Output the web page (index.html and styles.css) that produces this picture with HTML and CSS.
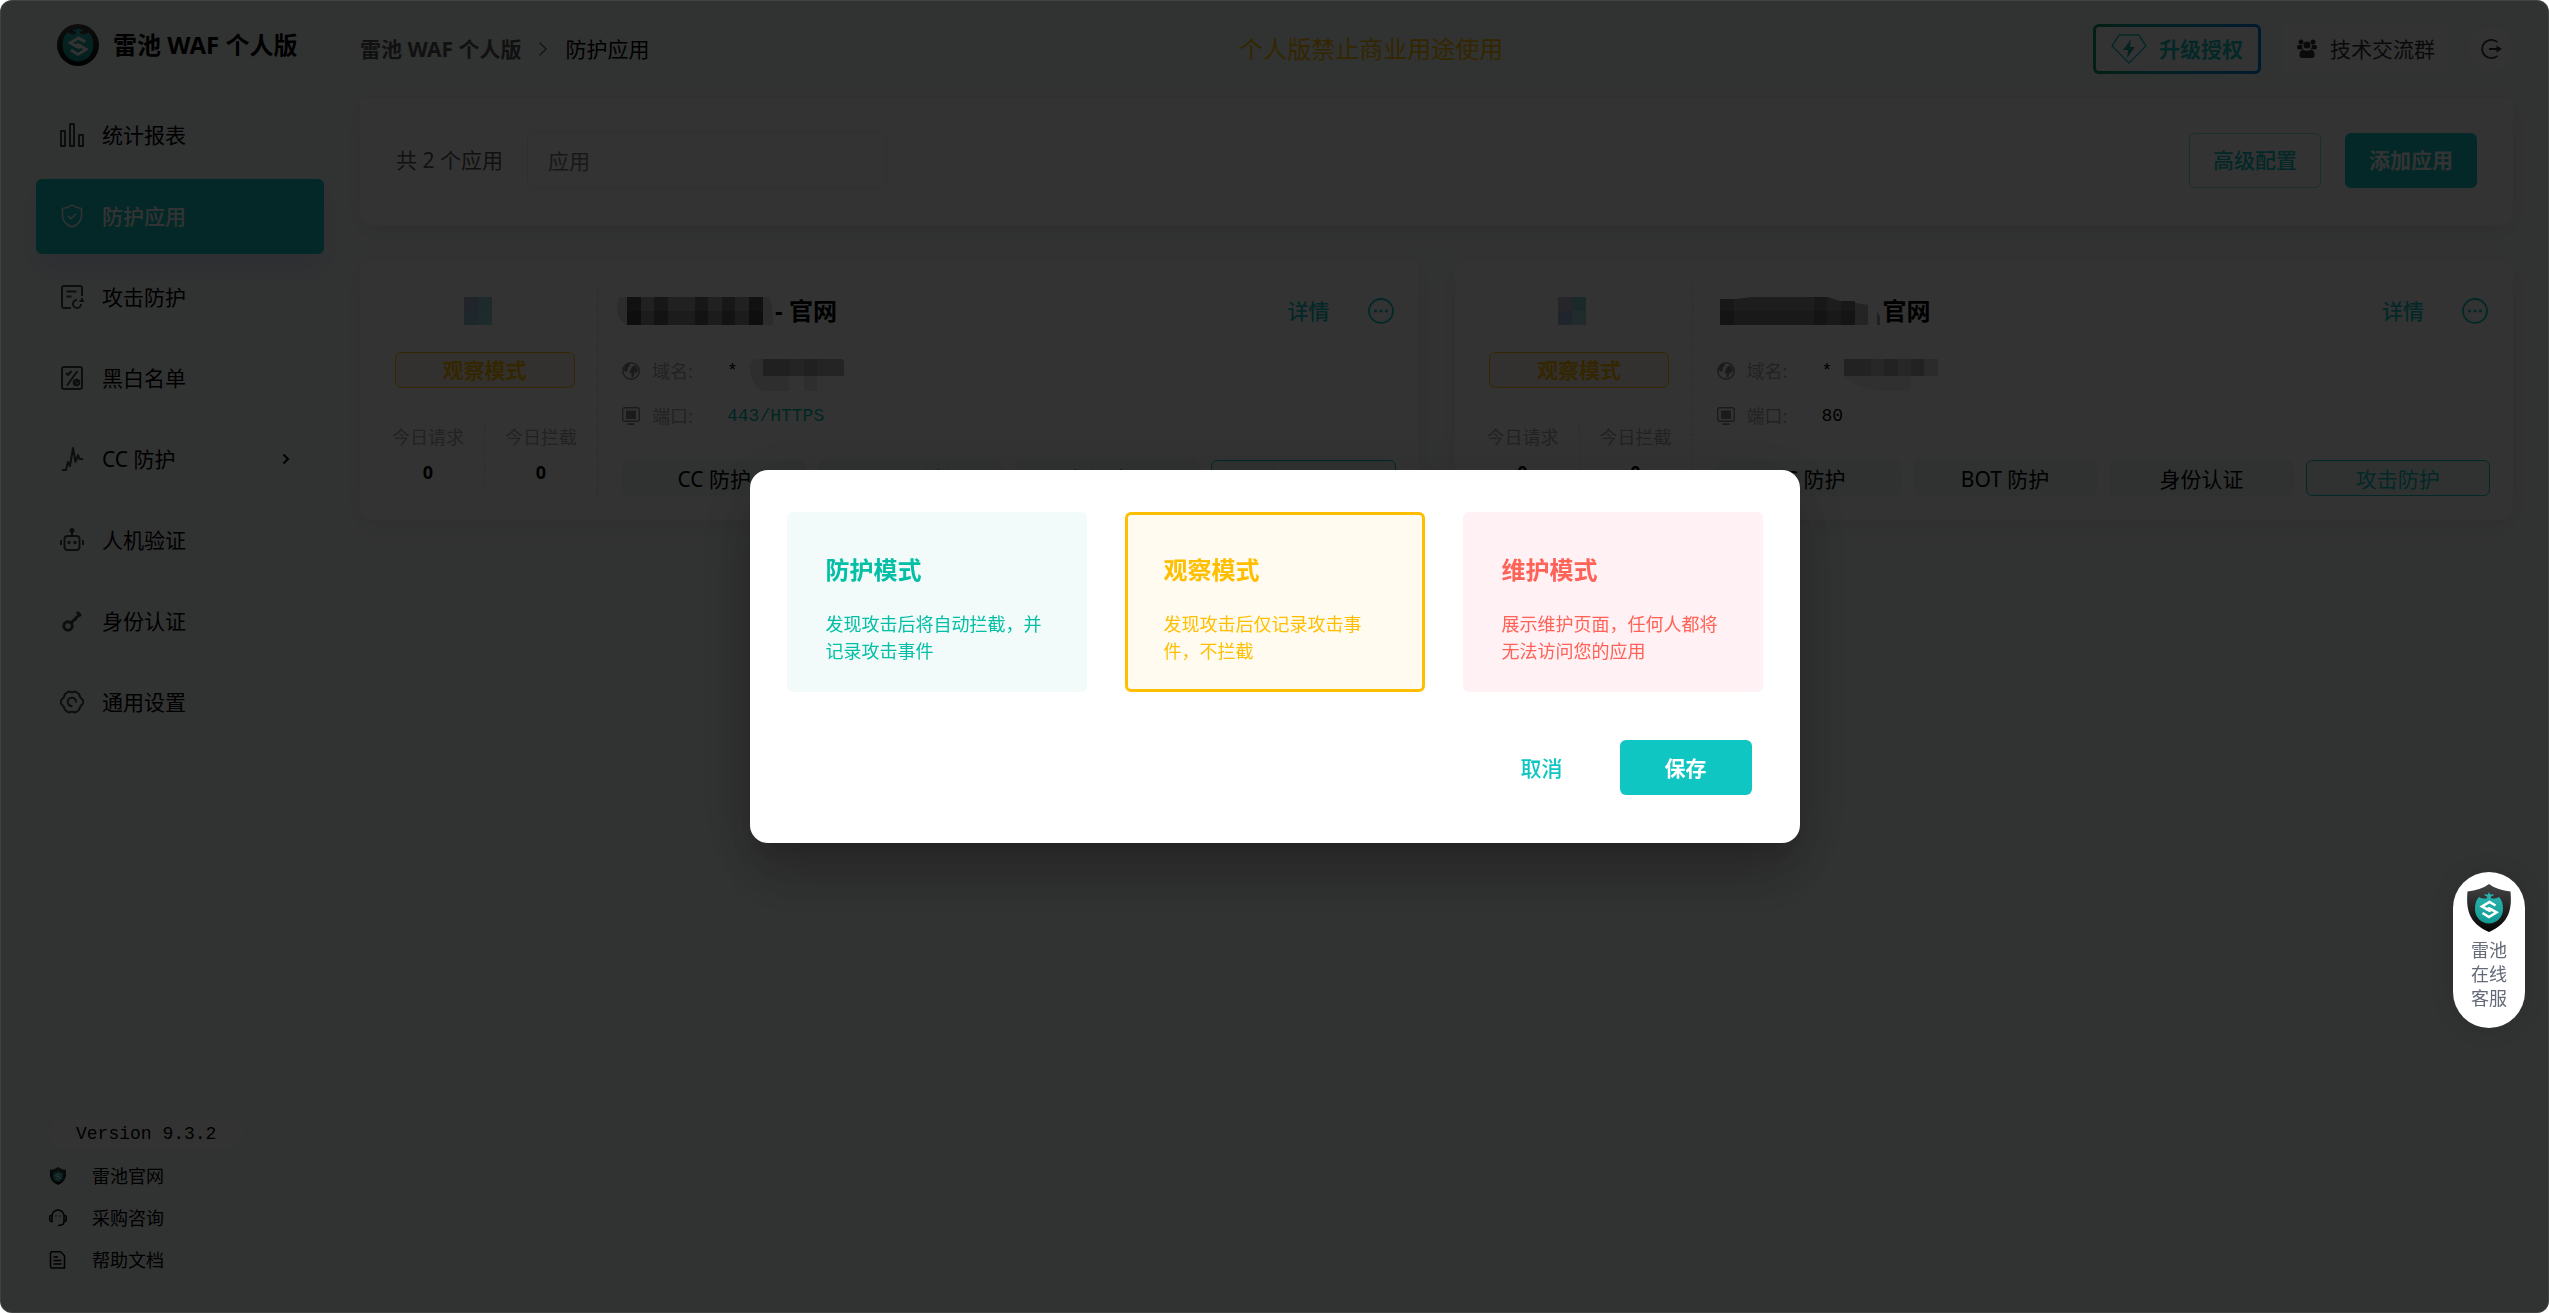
FILE: index.html
```html
<!DOCTYPE html>
<html lang="zh-CN">

<head>
    <meta charset="UTF-8">
    <meta name="viewport" content="width=device-width, initial-scale=1.0">
    <title>雷池 WAF 个人版 - 防护应用</title>
    <link rel="stylesheet" href="styles.css">
</head>

<body>
    <!-- shared icons -->
    <svg class="sprite" aria-hidden="true">
        <defs>
            <linearGradient id="teal" x1="0" y1="0" x2="0" y2="1">
                <stop offset="0" stop-color="#2bb5b0" />
                <stop offset="1" stop-color="#139a94" />
            </linearGradient>
            <linearGradient id="black" x1="0" y1="0" x2="0" y2="1">
                <stop offset="0" stop-color="#444" />
                <stop offset="1" stop-color="#050505" />
            </linearGradient>
        </defs>
        <symbol id="mark" viewBox="0 0 28 32">
            <path d="M14 0l1 2.300c1.300.5 2.700.3 4-.4-.4 1.600-1.600 2.400-3.300 2.500l.6 2.100c2.600.3 5.200-.1 7.700-1.400C27 8.500 28 12 28 17c0 8-6 14.500-14 14.500S0 25 0 17C0 12 1 8.500 4 5.100c2.500 1.300 5.100 1.700 7.700 1.400l.6-2.100C10.600 4.300 9.400 3.500 9 1.900c1.300.7 2.700.9 4 .4z" fill="url(#teal)" />
            <path d="M20.500 13.500L14.500 10 7 14.500l7.500 4.200 3-1.700M7.500 21l6.500 4 7.500-4.600-7.500-4.200-3 1.800" fill="none" stroke="#fff" stroke-width="2.600" />
        </symbol>
        <symbol id="shield" viewBox="0 0 44 48">
            <path d="M22 0c6 4.500 13 6.500 21.500 7.500C45 24 43 39 22 48 1 39-1 24 .5 7.500 9 6.500 16 4.500 22 0z" fill="url(#black)" />
            <use href="#mark" x="7" y="8" width="30" height="32" />
        </symbol>
        <symbol id="globe" viewBox="0 0 18 18">
            <circle cx="9" cy="9" r="8.200" fill="none" stroke="currentColor" stroke-width="1.400" />
            <path d="M4 2.500L7.500 1l.5 3-2.500 1.500L6 8l-2 2-2.500-2zM9 6.500l2.500-3 3 1 1.500 4-1.500 2.500-2-.5-1 4.500-2 .5v-4L7.500 11z" fill="currentColor" />
        </symbol>
        <symbol id="port" viewBox="0 0 18 18">
            <rect x=".7" y=".7" width="16.600" height="13.600" rx="2" fill="none" stroke="currentColor" stroke-width="1.400" />
            <path d="M4 3.500h10v8.500H4zM5.500 16.200h7v1.800h-7z" fill="currentColor" />
        </symbol>
        <symbol id="more" viewBox="0 0 26 26">
            <circle cx="13" cy="13" r="12" fill="none" stroke="currentColor" stroke-width="1.800" />
            <circle cx="7.500" cy="13" r="1.600" fill="currentColor" />
            <circle cx="13" cy="13" r="1.600" fill="currentColor" />
            <circle cx="18.500" cy="13" r="1.600" fill="currentColor" />
        </symbol>
    </svg>

    <aside class="sidebar">
        <div class="brand">
            <svg class="brand-logo" viewBox="0 0 42 42">
                <circle cx="21" cy="21" r="21" fill="url(#black)" />
                <use href="#mark" x="5" y="3" width="32" height="35" />
            </svg>
            <span>雷池 WAF 个人版</span>
        </div>

        <nav class="menu">
            <a class="menu-item" href="#">
                <svg class="menu-icon" viewBox="0 0 24 24"><path d="M1 8h4v15H1zM10 1h4v22h-4zM19 12h4v11h-4z" /></svg>
                统计报表
            </a>
            <a class="menu-item active" href="#">
                <svg class="menu-icon" viewBox="0 0 24 24"><path d="M12 1c3 2.200 6 3 9.500 3.500v7c0 5.500-4 9.500-9.500 11.500-5.500-2-9.500-6-9.500-11.500v-7C6 4 9 3.200 12 1zM8 12l3 2.700 5-5" /></svg>
                防护应用
            </a>
            <a class="menu-item" href="#">
                <svg class="menu-icon" viewBox="0 0 24 24"><path d="M11 23H4a2 2 0 0 1-2-2V3a2 2 0 0 1 2-2h16a2 2 0 0 1 2 2v8M6.500 6.500h10M6.500 11.500h5M17 15a4 4 0 1 0 4 4M22 13v3.500M19.500 16H24" /></svg>
                攻击防护
            </a>
            <a class="menu-item" href="#">
                <svg class="menu-icon" viewBox="0 0 24 24"><rect x="2" y="1" width="20" height="22" rx="2" /><path d="M6 7l2 2 3.500-4M17.500 5L7 19.500M14 18.500l4.500-4" /><circle cx="16.500" cy="16.500" r="2.800" /></svg>
                黑白名单
            </a>
            <a class="menu-item" href="#">
                <svg class="menu-icon" viewBox="0 0 24 24"><path d="M2 23h4l2-8 2 4L13 1l2.500 14L18 8l1.500 4H23" /></svg>
                CC 防护
                <svg class="menu-arrow" viewBox="0 0 12 12"><path d="M3.500 1.500L8 6l-4.500 4.500" /></svg>
            </a>
            <a class="menu-item" href="#">
                <svg class="menu-icon" viewBox="0 0 24 24"><rect x="4.500" y="8" width="15" height="14" rx="3" /><path d="M12 8V3M1 12v5M23 12v5" /><circle class="solid" cx="12" cy="2.500" r="1.500" /><circle class="solid" cx="9" cy="14.500" r=".7" /><circle class="solid" cx="15" cy="14.500" r=".7" /></svg>
                人机验证
            </a>
            <a class="menu-item" href="#">
                <svg class="menu-icon key" viewBox="0 0 24 24"><circle cx="8" cy="17" r="4.200" /><path d="M11 14L20.500 4.500M14 9l2.500 2M17 3l4 4" /></svg>
                身份认证
            </a>
            <a class="menu-item" href="#">
                <svg class="menu-icon" viewBox="0 0 24 24"><path d="M8.500 1.500q3.500 1.500 7 0L19 4q.5 3.500 4 6.200v3.600q-3.500 2.700-4 6.200l-3.500 2.500q-3.500-1.500-7 0L5 20q-.5-3.500-4-6.200v-3.600Q4.500 7.500 5 4zM12.500 16a4.200 4.200 0 1 1 3.500-3.500" /></svg>
                通用设置
            </a>
        </nav>

        <div class="sidebar-footer">
            <span class="version">Version 9.3.2</span>
            <a class="footer-link" href="#">
                <svg viewBox="0 0 44 48"><use href="#shield" /></svg>
                雷池官网
            </a>
            <a class="footer-link" href="#">
                <svg viewBox="0 0 18 18"><path d="M3 7a6 6 0 0 1 12 0M3 7v5.500H2A1.500 1.500 0 0 1 .8 11V9A1.500 1.500 0 0 1 3 7zM15 7v5.500h1a1.500 1.500 0 0 0 1.200-1.500V9A1.500 1.500 0 0 0 15 7zM15 12.500c0 2.500-2 4-6 4M7 6.500v1M11 6.500v1" /></svg>
                采购咨询
            </a>
            <a class="footer-link" href="#">
                <svg viewBox="0 0 18 18"><path d="M3 .8h8.500l4 4V17H3a1.500 1.500 0 0 1-1.500-1.500v-13A1.500 1.500 0 0 1 3 .8zM4.500 6H9M4.500 9.500h8M4.500 13h8" /></svg>
                帮助文档
            </a>
        </div>
    </aside>

    <main class="main">
        <header class="topbar">
            <div class="breadcrumb">
                <a href="#">雷池 WAF 个人版</a>
                <svg viewBox="0 0 10 16"><path d="M1.500 1.500L8 8l-6.500 6.500" /></svg>
                <span>防护应用</span>
            </div>
            <div class="notice">个人版禁止商业用途使用</div>
            <div class="topbar-actions">
                <button class="upgrade">
                    <svg viewBox="0 0 36 30">
                        <path d="M8 1h20l7 11-17 17L1 12z" fill="none" stroke="#0fc6c2" stroke-width="1.400" />
                        <path d="M20 5l-8 11h5l-1 8 8-11h-5z" fill="url(#teal)" />
                    </svg>
                    升级授权
                </button>
                <button class="group">
                    <svg viewBox="0 0 20 20">
                        <circle cx="4" cy="3" r="2.500" /><circle cx="16" cy="3" r="2.500" /><circle cx="10" cy="6" r="3.600" />
                        <path d="M0 8q0-2 2-2h3q0 2.500 1.300 3.700Q5 10.500 2 10.500 0 10.500 0 8zM20 8q0-2-2-2h-3q0 2.500-1.300 3.700 1.300.8 4.300.8 2 0 2-2.500zM2.500 15q0-3.500 3.500-4.500 4 2.500 8 0 3.500 1 3.500 4.500v1.500q0 2.500-3 2.500h-9q-3 0-3-2.500z" />
                    </svg>
                    技术交流群
                </button>
                <button class="logout" aria-label="退出登录">
                    <svg viewBox="0 0 22 22"><path d="M17.500 4.200A9.200 9.200 0 1 0 17.500 17.800M9 11h8" fill="none" stroke="currentColor" stroke-width="1.800" /><path d="M16.500 7.500L22 11l-5.500 3.500z" /></svg>
                </button>
            </div>
        </header>

        <section class="filter-card">
            <label for="keyword">共 2 个应用</label>
            <input type="text" id="keyword" placeholder="应用">
            <div class="filter-actions">
                <button class="btn btn-outline">高级配置</button>
                <button class="btn btn-primary">添加应用</button>
            </div>
        </section>

        <section class="apps">
            <article class="app-card">
                <div class="app-side">
                    <svg class="app-icon" viewBox="0 0 28 28"><path fill="#a8b4d4" d="M0 0h14v14H0z" /><path fill="#8fccd2" d="M14 0h14v14H14z" /><path fill="#98c0dc" d="M0 14h14v14H0z" /><path fill="#8fd4dc" d="M14 14h14v14H14z" /></svg>
                    <div class="mode-tag">观察模式</div>
                    <div class="stats">
                        <div class="stat"><span>今日请求</span><b>0</b></div>
                        <div class="stat"><span>今日拦截</span><b>0</b></div>
                    </div>
                </div>
                <div class="app-body">
                    <div class="app-head">
                        <h3>
                            <svg class="mask-name" viewBox="0 0 158 28">
                                <path fill="#dadada" d="M10 0v28Q0 24 0 10 0 3 3 0zM146 0h6q4 6 4 28h-10z" />
                                <path fill="#a5a5a5" d="M10 0h136v28H10z" />
                                <path fill="#555" d="M10 0h14v28H10zM132 0h14v28h-14z" />
                                <path fill="#727272" d="M37 0h14v28H37zM78 0h13v28H78zM105 0h13v28h-13z" />
                                <path fill="#000" fill-opacity=".15" d="M10 14h136v14H10z" />
                            </svg>
                            - 官网
                        </h3>
                        <a href="#">详情</a>
                        <button class="more" aria-label="更多"><svg viewBox="0 0 26 26"><use href="#more" /></svg></button>
                    </div>
                    <dl class="info">
                        <dt><svg viewBox="0 0 18 18"><use href="#globe" /></svg>域名:</dt>
                        <dd>*
                            <svg class="mask-domain" viewBox="0 0 94 32">
                                <path fill="#e6e6e6" d="M5 0h8v32Q0 26 0 8 0 2 5 0zM13 17h26v15H13zM54 17h13v15H54z" />
                                <path fill="#b4b4b4" d="M13 0h78q3 0 3 3v14H13z" />
                                <path fill="#a0a0a0" d="M13 0h27v17H13zM54 0h13v17H54z" />
                            </svg>
                        </dd>
                        <dt><svg viewBox="0 0 18 18"><use href="#port" /></svg>端口:</dt>
                        <dd class="https">443/HTTPS</dd>
                    </dl>
                    <div class="features">
                        <button>CC 防护</button>
                        <button>BOT 防护</button>
                        <button>身份认证</button>
                        <button class="on">攻击防护</button>
                    </div>
                </div>
            </article>

            <article class="app-card">
                <div class="app-side">
                    <svg class="app-icon" viewBox="0 0 28 28"><path fill="#bcbcd0" d="M0 0h14v14H0z" /><path fill="#86ccd6" d="M14 0h14v14H14z" /><path fill="#9ab8d8" d="M0 14h14v14H0z" /><path fill="#a4d4da" d="M14 14h14v14H14z" /></svg>
                    <div class="mode-tag">观察模式</div>
                    <div class="stats">
                        <div class="stat"><span>今日请求</span><b>0</b></div>
                        <div class="stat"><span>今日拦截</span><b>0</b></div>
                    </div>
                </div>
                <div class="app-body">
                    <div class="app-head">
                        <h3>
                            <svg class="mask-name wide" viewBox="0 0 168 28">
                                <path fill="#929292" d="M8 2h16l16-2h76l12 4 28 4v20H8z" />
                                <path fill="#7a7a7a" d="M8 2h14v26H8zM102 0h13v28h-13zM129 4h14v24h-14z" />
                                <path fill="#b4b4b4" d="M143 6l13 2v20h-13z" />
                                <path fill="#000" fill-opacity=".15" d="M8 14h135v14H8z" />
                                <path fill="#a0a0a0" d="M165 14l3 6v8h-3z" />
                            </svg>
                            官网
                        </h3>
                        <a href="#">详情</a>
                        <button class="more" aria-label="更多"><svg viewBox="0 0 26 26"><use href="#more" /></svg></button>
                    </div>
                    <dl class="info">
                        <dt><svg viewBox="0 0 18 18"><use href="#globe" /></svg>域名:</dt>
                        <dd>*
                            <svg class="mask-domain" viewBox="0 0 94 32">
                                <path fill="#eee" d="M0 17h67v15H40Q10 30 0 17z" />
                                <path fill="#c0c0c0" d="M0 0h80v17H0z" />
                                <path fill="#a8a8a8" d="M0 0h27v17H0zM40 0h14v17H40zM67 0h13v17H67z" />
                                <path fill="#d8d8d8" d="M80 0h14v17H80z" />
                            </svg>
                        </dd>
                        <dt><svg viewBox="0 0 18 18"><use href="#port" /></svg>端口:</dt>
                        <dd>80</dd>
                    </dl>
                    <div class="features">
                        <button>CC 防护</button>
                        <button>BOT 防护</button>
                        <button>身份认证</button>
                        <button class="on">攻击防护</button>
                    </div>
                </div>
            </article>
        </section>
    </main>

    <div class="overlay">
        <form class="dialog" role="dialog" aria-label="防护模式">
            <div class="modes">
                <label class="mode protect">
                    <input type="radio" name="mode">
                    <strong>防护模式</strong>
                    <span>发现攻击后将自动拦截，并记录攻击事件</span>
                </label>
                <label class="mode observe">
                    <input type="radio" name="mode" checked>
                    <strong>观察模式</strong>
                    <span>发现攻击后仅记录攻击事件，不拦截</span>
                </label>
                <label class="mode maintain">
                    <input type="radio" name="mode">
                    <strong>维护模式</strong>
                    <span>展示维护页面，任何人都将无法访问您的应用</span>
                </label>
            </div>
            <div class="dialog-actions">
                <button type="button" class="btn btn-text">取消</button>
                <button type="button" class="btn btn-primary">保存</button>
            </div>
        </form>
    </div>

    <a class="service" href="#">
        <svg viewBox="0 0 44 48"><use href="#shield" /></svg>
        <span>雷池</span>
        <span>在线</span>
        <span>客服</span>
    </a>
</body>

</html>
```

FILE: styles.css
```css
* {
    box-sizing: border-box;
}

html {
    background: #fff;
    overflow: hidden;
}

body {
    margin: 0;
    min-height: 100vh;
    display: flex;
    background: #f5faf8;
    color: #000;
    font-family: "Noto Sans", "Noto Sans CJK SC", sans-serif;
    font-size: 21px;
    line-height: 30px;
    border-radius: 12px;
    overflow: hidden;
}

a {
    color: inherit;
    text-decoration: none;
}

button,
input {
    font: inherit;
    color: inherit;
}

button {
    padding: 0;
    border: none;
    background: none;
    cursor: pointer;
}

svg {
    display: block;
    flex: none;
}

.sprite {
    position: absolute;
    width: 0;
    height: 0;
}

/* sidebar */
.sidebar {
    width: 360px;
    flex: none;
    padding: 24px 36px 32px;
    display: flex;
    flex-direction: column;
}

.brand {
    display: flex;
    align-items: center;
    gap: 14px;
    padding-left: 21px;
    margin-bottom: 32px;
    font-size: 24px;
    font-weight: bold;
}

.brand-logo {
    width: 42px;
    height: 42px;
}

.menu {
    display: flex;
    flex-direction: column;
    gap: 6px;
}

.menu-item {
    height: 75px;
    padding: 0 32px 2px 24px;
    display: flex;
    align-items: center;
    gap: 18px;
    border-radius: 6px;
}

.menu-item.active {
    background: #0fc6c2;
    color: #fff;
    font-weight: 500;
    box-shadow: 0 15px 24px rgba(50, 72, 242, 0.1);
}

.menu-icon {
    width: 24px;
    height: 24px;
    fill: none;
    stroke: #444;
    stroke-width: 2;
    stroke-linejoin: round;
}

.menu-item.active .menu-icon {
    stroke: #fff;
    stroke-width: 1.5;
}

.menu-icon.key {
    stroke-width: 3;
}

.menu-icon .solid {
    fill: #444;
}

.menu-arrow {
    width: 12px;
    height: 12px;
    margin-left: auto;
    fill: none;
    stroke: #000;
    stroke-width: 2;
}

.sidebar-footer {
    margin-top: auto;
    padding-left: 13px;
    font-size: 18px;
}

.version {
    display: block;
    width: 194px;
    margin-bottom: 6px;
    padding-left: 27px;
    border-radius: 15px;
    background: #fff;
    font-family: "Liberation Mono", monospace;
}

.footer-link {
    height: 42px;
    display: flex;
    align-items: center;
    gap: 25px;
}

.footer-link svg {
    width: 18px;
    height: 18px;
    fill: none;
    stroke: #000;
    stroke-width: 1.5;
}

.footer-link use {
    stroke: none;
}

/* top bar */
.main {
    flex: 1;
    min-width: 0;
    padding: 24px 36px 24px 0;
}

.topbar {
    height: 50px;
    margin-bottom: 24px;
    display: flex;
    align-items: center;
    justify-content: space-between;
}

.breadcrumb {
    display: flex;
    align-items: center;
    gap: 17px;
}

.breadcrumb a {
    color: #555;
    font-weight: bold;
}

.breadcrumb svg {
    width: 10px;
    height: 16px;
    fill: none;
    stroke: #555;
    stroke-width: 1.2;
}

.notice {
    color: #ffbf00;
    font-size: 24px;
}

.topbar-actions {
    display: flex;
    align-items: center;
    gap: 22px;
}

.upgrade {
    width: 168px;
    height: 50px;
    display: flex;
    align-items: center;
    justify-content: center;
    gap: 12px;
    border: 3px solid transparent;
    border-radius: 6px;
    background: linear-gradient(#fff, #fff) padding-box, linear-gradient(90deg, #0f9a60, #00a0c0 50%, #0080e0) border-box;
    color: #0fc6c2;
    font-weight: bold;
}

.upgrade svg {
    width: 36px;
    height: 30px;
}

.group {
    height: 50px;
    padding: 0 12px 0 14px;
    display: flex;
    align-items: center;
    gap: 13px;
    border-radius: 6px;
    background: #fff;
    color: #333;
}

.group svg {
    width: 20px;
    height: 20px;
    fill: #333;
}

.logout {
    width: 44px;
    height: 44px;
    display: flex;
    align-items: center;
    justify-content: center;
    border-radius: 22px;
    background: #fff;
    color: #333;
}

.logout svg {
    width: 22px;
    height: 22px;
    fill: #333;
}

/* filter */
.filter-card,
.app-card {
    background: #fff;
    border-radius: 12px;
    box-shadow: 0 6px 24px rgba(40, 0, 0, 0.08);
}

.filter-card {
    display: flex;
    align-items: center;
    gap: 24px;
    padding: 34px 36px 37px;
    margin-bottom: 34px;
    border-radius: 0 0 12px 12px;
    color: #555;
}

.filter-card input {
    width: 360px;
    height: 56px;
    padding: 2px 20px 0;
    border: 1px solid #e6e9e8;
    border-radius: 6px;
    background: none;
}

.filter-card input::placeholder {
    color: #777;
    opacity: 1;
}

.filter-actions {
    margin-left: auto;
    display: flex;
    gap: 24px;
}

.btn {
    width: 132px;
    height: 55px;
    border-radius: 6px;
    font-weight: 500;
}

.btn-outline {
    border: 1px solid #87e2e0;
    color: #0fc6c2;
}

.btn-primary {
    background: #0fc6c2;
    color: #fff;
    font-weight: bold;
}

.btn-text {
    color: #0fc6c2;
}

/* application cards */
.apps {
    display: grid;
    grid-template-columns: 1fr 1fr;
    gap: 36px;
}

.app-card {
    padding: 25px 23px 24px 32px;
    display: flex;
}

.app-side {
    width: 206px;
    padding: 13px 20px 0 0;
    display: flex;
    flex-direction: column;
    align-items: center;
    border-right: 1px dashed #ddd;
}

.app-icon {
    width: 28px;
    height: 28px;
    margin: 0 14px 27px 0;
}

.mode-tag {
    width: 180px;
    height: 36px;
    margin-bottom: 36px;
    border: 1px solid #ffbf00;
    border-radius: 6px;
    background: #fff6ee;
    color: #ffbf00;
    font-weight: bold;
    line-height: 34px;
    text-align: center;
}

.stats {
    width: 100%;
    display: flex;
    justify-content: space-between;
}

.stat {
    display: flex;
    flex-direction: column;
    align-items: center;
    gap: 6px;
}

.stat + .stat {
    padding-left: 20px;
    border-left: 1px dashed #ddd;
}

.stat span {
    color: #aaa;
    font-size: 18px;
    line-height: 27px;
}

.stat b {
    font-size: 18px;
}

.app-body {
    flex: 1;
    padding-left: 24px;
}

.app-head {
    height: 54px;
    padding-right: 2px;
    display: flex;
    align-items: center;
    color: #0fc6c2;
}

.app-head h3 {
    margin: 0 auto 0 -5px;
    display: flex;
    align-items: center;
    color: #000;
    font-size: 24px;
}

.app-head a {
    font-weight: 500;
}

.mask-name {
    width: 158px;
    height: 28px;
}

.mask-name.wide {
    width: 168px;
    margin-right: 3px;
}

.more {
    margin-left: 38px;
    color: #0fc6c2;
}

.more svg {
    width: 26px;
    height: 26px;
}

.info {
    margin: 10px 0 22px;
    display: grid;
    grid-template-columns: 105px 1fr;
    grid-auto-rows: 45px;
    align-items: center;
    font-size: 18px;
}

.info dt {
    display: flex;
    align-items: center;
    gap: 12px;
    color: #aaa;
}

.info dt svg {
    width: 18px;
    height: 18px;
    color: #888;
}

.info dd {
    margin: 0;
    display: flex;
    align-items: center;
    gap: 12px;
    font-family: "Liberation Mono", monospace;
}

.info .https {
    color: #00bfa5;
}

.mask-domain {
    width: 94px;
    height: 32px;
    margin-top: 8px;
}

.features {
    display: grid;
    grid-template-columns: repeat(4, 1fr);
    gap: 12px;
}

.features button {
    height: 36px;
    padding-top: 1px;
    border-radius: 6px;
    background: #eff6f5;
}

.features .on {
    border: 1px solid #0fc6c2;
    background: #f0f9f9;
    color: #0fc6c2;
}

/* mode dialog */
.overlay {
    position: fixed;
    inset: 0;
    display: flex;
    align-items: center;
    justify-content: center;
    border-radius: 12px;
    background: rgba(0, 0, 0, 0.8);
    box-shadow: inset 0 0 0 1px rgba(255, 255, 255, 0.08);
}

.dialog {
    width: 1050px;
    padding: 42px 37px 48px;
    border-radius: 18px;
    background: #fff;
    box-shadow: 0 16px 22px -10px rgba(0, 0, 0, 0.2), 0 36px 57px 4px rgba(0, 0, 0, 0.14), 0 14px 69px 12px rgba(0, 0, 0, 0.12);
}

.modes {
    display: grid;
    grid-template-columns: repeat(3, 1fr);
    gap: 38px;
}

.mode {
    padding: 37px 36px 24px;
    border: 3px solid transparent;
    border-radius: 6px;
    cursor: pointer;
}

.mode:has(input:checked) {
    border-color: currentColor;
}

.mode input {
    position: absolute;
    opacity: 0;
}

.mode strong {
    display: block;
    margin-bottom: 23px;
    font-size: 24px;
    line-height: 36px;
}

.mode span {
    display: block;
    font-size: 18px;
    line-height: 27px;
}

.protect {
    color: #02bfa5;
    background: #f2fbfa;
}

.observe {
    color: #ffbf00;
    background: #fffbf0;
}

.maintain {
    color: #ff6257;
    background: #fff1f4;
}

.dialog-actions {
    margin-top: 48px;
    padding-right: 11px;
    display: flex;
    justify-content: flex-end;
    gap: 12px;
}

/* floating customer service entry */
.service {
    position: fixed;
    right: 24px;
    bottom: 285px;
    width: 72px;
    padding: 12px 0 18px;
    display: flex;
    flex-direction: column;
    align-items: center;
    border-radius: 36px;
    background: #fff;
    box-shadow: 0 0 24px rgba(0, 0, 0, 0.1);
    color: #646a78;
    font-size: 18px;
    line-height: 24px;
}

.service svg {
    width: 44px;
    height: 48px;
    margin-bottom: 6px;
}
```
